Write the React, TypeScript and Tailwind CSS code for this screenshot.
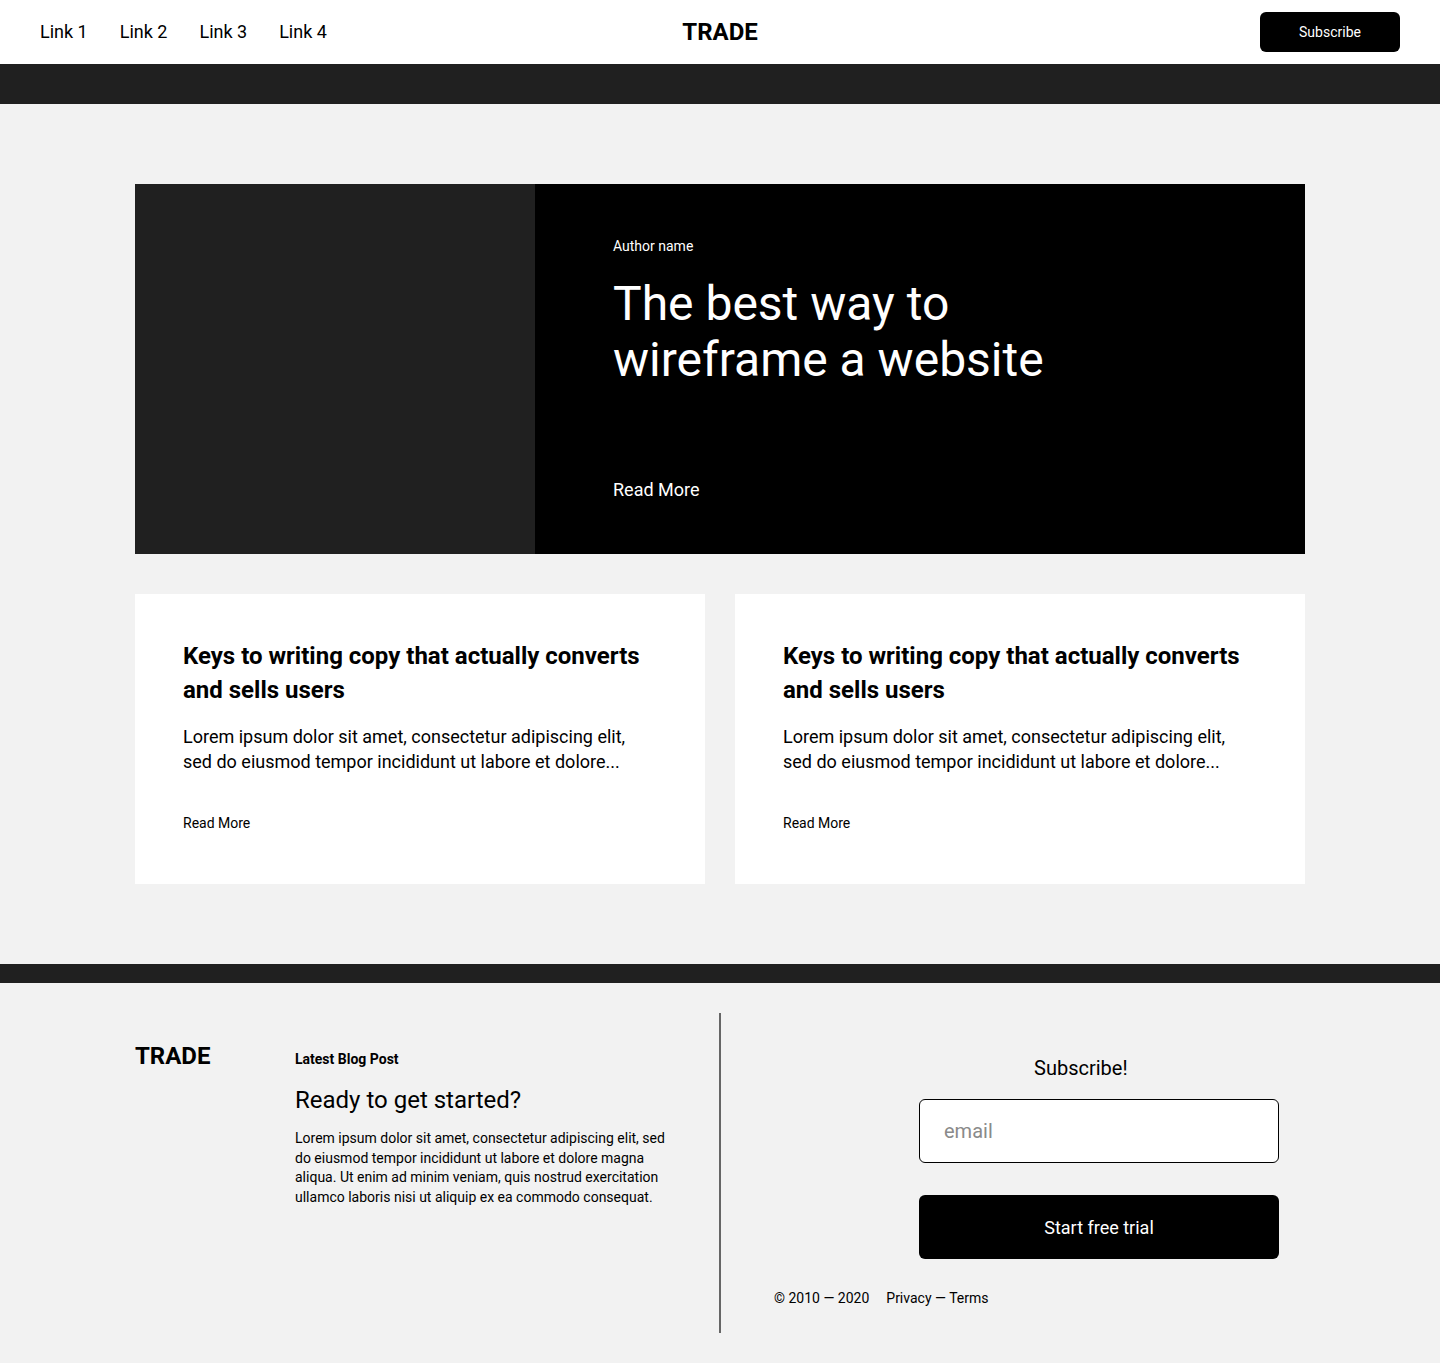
const links = ["Link 1", "Link 2", "Link 3", "Link 4"];

const posts = [
  {
    title: "Keys to writing copy that actually converts and sells users",
    body: "Lorem ipsum dolor sit amet, consectetur adipiscing elit, sed do eiusmod tempor incididunt ut labore et dolore...",
  },
  {
    title: "Keys to writing copy that actually converts and sells users",
    body: "Lorem ipsum dolor sit amet, consectetur adipiscing elit, sed do eiusmod tempor incididunt ut labore et dolore...",
  },
];

export default function App() {
  return (
    <div className="min-h-screen bg-[#f2f2f2] font-['Roboto',sans-serif] text-black">
      <header className="flex h-16 items-center bg-white px-10">
        <nav className="flex flex-1 gap-8 text-[18px]">
          {links.map((l) => (
            <a key={l} href="#" className="leading-[24px]">
              {l}
            </a>
          ))}
        </nav>
        <div className="text-[24px] font-bold leading-[28px]">TRADE</div>
        <div className="flex flex-1 justify-end">
          <button className="h-10 w-[140px] rounded-md bg-black text-[14px] text-white">
            Subscribe
          </button>
        </div>
      </header>
      <div className="h-10 bg-[#202020]" />

      <main className="mx-auto w-[1170px] py-20">
        <section className="flex h-[370px]">
          <div className="w-[400px] bg-[#202020]" />
          <div className="flex flex-1 flex-col bg-black pl-[78px] pt-[52px] text-white">
            <p className="text-[14px] leading-[20px]">Author name</p>
            <h1 className="mt-5 text-[48px] leading-[56px]">
              The best way to
              <br />
              wireframe a website
            </h1>
            <a href="#" className="mt-[90px] text-[18px] leading-[24px]">
              Read More
            </a>
          </div>
        </section>

        <section className="mt-10 grid grid-cols-2 gap-[30px]">
          {posts.map((p, i) => (
            <article key={i} className="h-[290px] bg-white px-12 pt-[45px]">
              <h3 className="text-[24px] font-bold leading-[34px]">{p.title}</h3>
              <p className="mt-[17px] pr-6 text-[18px] leading-[25px]">{p.body}</p>
              <a href="#" className="mt-[39px] block text-[14px] leading-[20px]">
                Read More
              </a>
            </article>
          ))}
        </section>
      </main>

      <div className="h-[19px] bg-[#202020]" />

      <footer className="mx-auto flex w-[1170px] py-[30px]">
        <div className="flex w-[584px]">
          <div className="mt-[29px] w-[160px] text-[24px] font-bold leading-[28px]">TRADE</div>
          <div className="w-[380px] pt-[36px]">
            <p className="text-[14px] font-bold leading-[20px]">Latest Blog Post</p>
            <h4 className="mt-[15px] text-[24px] leading-[32px]">Ready to get started?</h4>
            <p className="mt-[13px] text-[14px] leading-[19.6px]">
              Lorem ipsum dolor sit amet, consectetur adipiscing elit, sed do eiusmod tempor
              incididunt ut labore et dolore magna aliqua. Ut enim ad minim veniam, quis nostrud
              exercitation ullamco laboris nisi ut aliquip ex ea commodo consequat.
            </p>
          </div>
        </div>
        <div className="h-[320px] flex-1 border-l-2 border-[#666666]">
          <div className="ml-[198px] w-[360px] pt-[41px]">
            <p className="pl-[115px] text-[20px] leading-[28px]">Subscribe!</p>
            <input
              type="email"
              placeholder="email"
              className="mt-[17px] h-16 w-full rounded-md border border-black bg-white px-6 text-[20px] outline-none placeholder:text-[#8a8a8a]"
            />
            <button className="mt-8 h-16 w-full rounded-md bg-black text-[18px] text-white">
              Start free trial
            </button>
          </div>
          <div className="ml-[53px] mt-[29px] flex gap-[17px] text-[14px] leading-[20px]">
            <span>© 2010 — 2020</span>
            <span>Privacy — Terms</span>
          </div>
        </div>
      </footer>
    </div>
  );
}
